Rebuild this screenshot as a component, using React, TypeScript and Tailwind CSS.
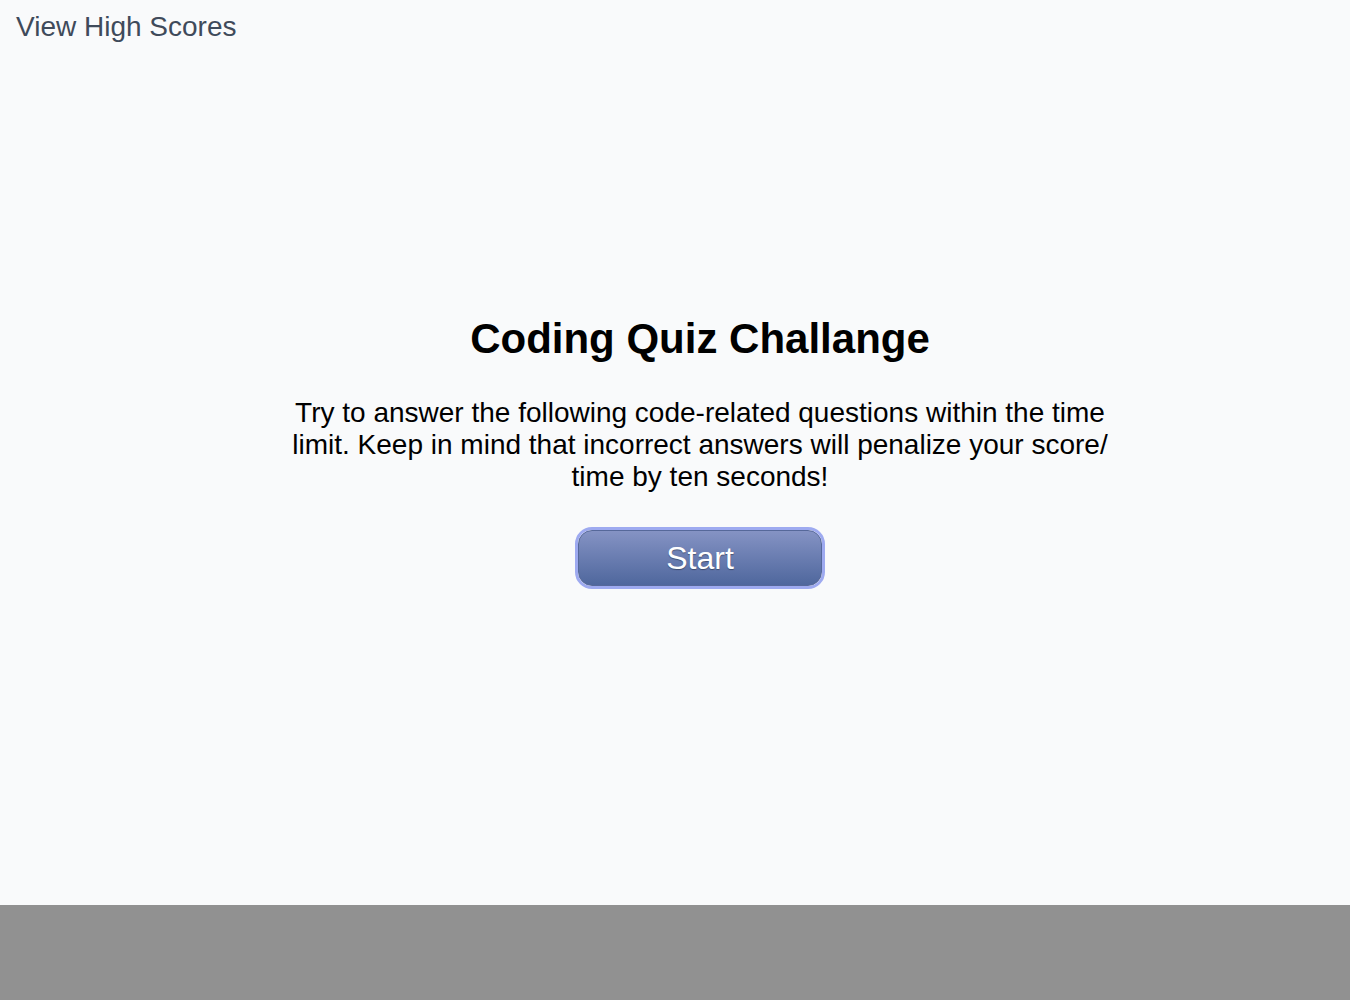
export default function App() {
  return (
    <div className="flex flex-col h-[1000px] bg-[#f9fafb] font-['Liberation_Sans',Helvetica,Arial,sans-serif]">
      <div className="grid flex-1">
        {/* Header link */}
        <div className="[grid-area:1/1] self-start px-4 pt-[9px]">
          <a href="#" className="text-[28px] leading-[36px] text-[#3f4a5a]">
            View High Scores
          </a>
        </div>

        {/* Intro */}
        <div className="[grid-area:1/1] flex items-center justify-center pl-[50px] pb-[2px]">
          <div className="flex flex-col items-center w-[820px] text-center text-black">
            <h1 className="text-[42px] leading-[48px] font-bold">Coding Quiz Challange</h1>
            <p className="mt-[34px] text-[28px] leading-[32px]">
              Try to answer the following code-related questions within the time limit. Keep in mind that incorrect answers will penalize your score/ time by ten seconds!
            </p>
            <button className="mt-[34px] w-[250px] h-[62px] rounded-[17px] border-[3px] border-[#9eaaf0] p-0">
              <span className="flex items-center justify-center w-full h-full rounded-[14px] border border-[#56689a] bg-gradient-to-b from-[#8593c4] to-[#4f679d] text-[32px] text-white [text-shadow:0_1px_1px_rgba(0,0,0,0.35)]">
                Start
              </span>
            </button>
          </div>
        </div>
      </div>

      {/* Footer */}
      <footer className="h-[95px] bg-[#919191]" />
    </div>
  );
}
